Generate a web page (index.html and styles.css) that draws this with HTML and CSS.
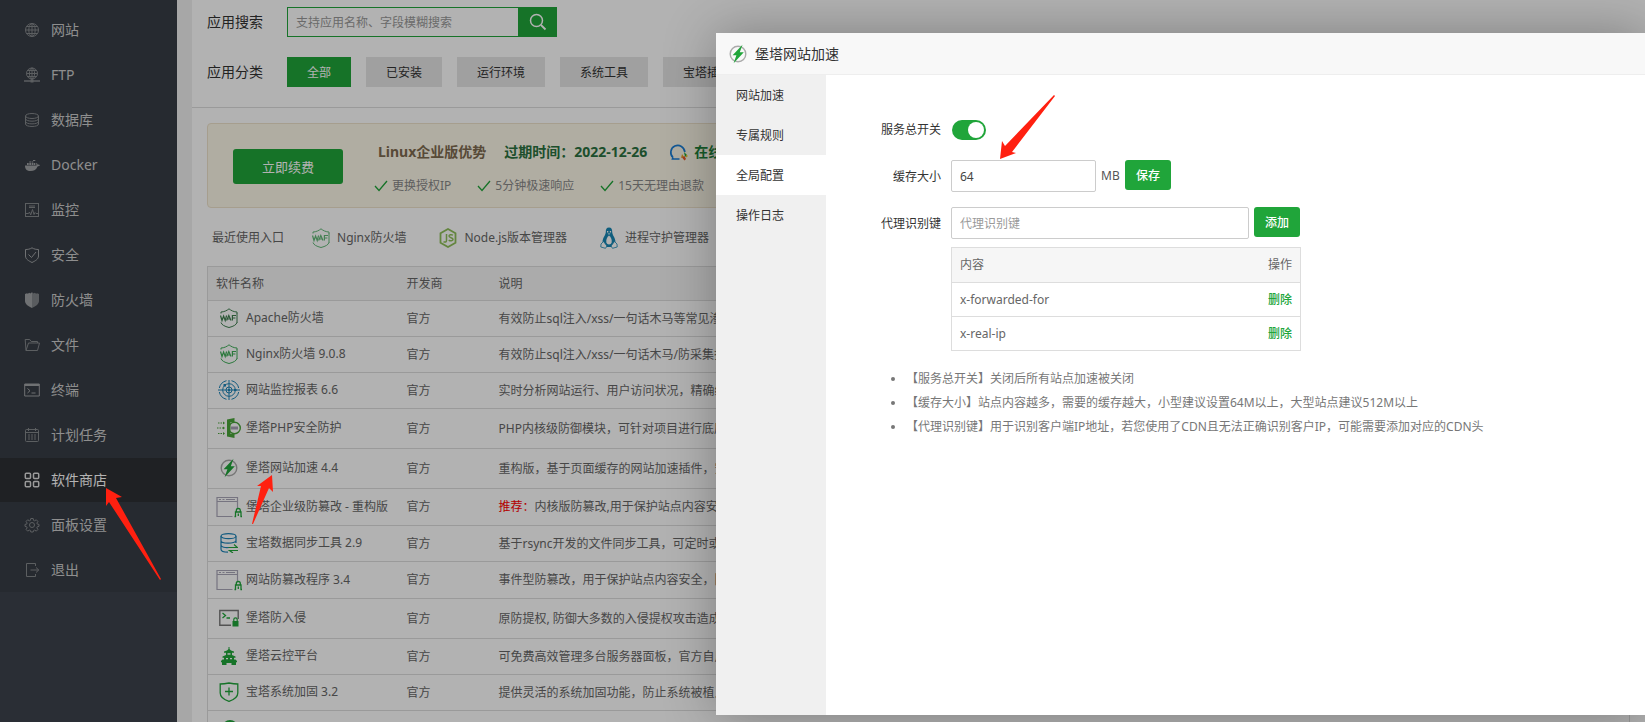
FILE: index.html
```html
<!DOCTYPE html>
<html lang="zh-CN">
<head>
<meta charset="utf-8">
<title>软件商店</title>
<link rel="stylesheet" href="styles.css">
</head>
<body>
<svg class="defs" aria-hidden="true">
  <symbol id="waf" viewBox="0 0 18 20">
    <path d="M1 5.500V4C4 4 7 2.500 9 .8 11 2.500 14 4 17 4v1.500M1 14.500c.8 2.500 3.500 3.800 8 5 4.500-1.200 7.200-2.500 8-5" fill="none" stroke="currentColor"/>
    <path d="M17 5v10" stroke="currentColor"/>
    <path d="M.5 7.500l1.500 5 1.600-4.500 1.600 4.500 1.400-5M6.600 12.500l2.200-5 2.200 5M7.400 11h3M12.400 12.500v-5H16M12.400 10h3" fill="none" stroke="currentColor" stroke-width="1.200"/>
  </symbol>
  <symbol id="bolt" viewBox="0 0 18 20">
    <circle cx="9" cy="10" r="7.800" fill="none" stroke="#aaa" stroke-width="1.400"/>
    <path d="M13.500.8L3.600 11.200h3.800L4.600 19.200 14.800 8.200h-4z" fill="#20a53a"/>
  </symbol>
  <symbol id="winlock" viewBox="0 0 26 22">
    <path d="M16.500 20.500H1V1.500h20.500v11M1 5.500h20.500" fill="none" stroke="#aaa6b8" stroke-width="1.200"/>
    <path d="M3 3.500h2M6.500 3.500h2M10 3.500h9" stroke="#aaa6b8"/>
    <path d="M19.500 21v-5h5.500v5M18.500 20.500h1.500M24.500 20.500H26M20.300 16v-1.500a2 2 0 0 1 4 0V16M22.300 17.500V20" fill="none" stroke="#20a53a" stroke-width="1.300"/>
  </symbol>
  <symbol id="check" viewBox="0 0 14 12">
    <path d="M1 6l4 4.500L13 1" fill="none" stroke="#20a53a" stroke-width="1.300"/>
  </symbol>
</svg>

<div class="app">
  <nav class="sidebar">
    <a class="nav-item" href="#site"><svg viewBox="0 0 16 16"><circle cx="8" cy="8" r="6.500"/><ellipse cx="8" cy="8" rx="3.200" ry="6.500"/><path d="M8 1.500v13M1.500 8h13M2.500 4.500h11M2.500 11.500h11"/></svg>网站</a>
    <a class="nav-item" href="#ftp"><svg viewBox="0 0 16 16"><circle cx="8" cy="6.500" r="5.500"/><ellipse cx="8" cy="6.500" rx="2.600" ry="5.500"/><path d="M8 1v13M2.500 6.500h11M3.500 3.500h9M3.500 9.500h9"/><path d="M0 14h16" stroke-width="1.500"/><path d="M6.500 14h3" stroke-width="3"/></svg>FTP</a>
    <a class="nav-item" href="#db"><svg viewBox="0 0 16 16"><ellipse cx="8" cy="4" rx="6.500" ry="2.500"/><path d="M1.500 4v8c0 3.300 13 3.300 13 0V4M1.500 6.700c0 3.300 13 3.300 13 0M1.500 9.400c0 3.300 13 3.300 13 0"/></svg>数据库</a>
    <a class="nav-item" href="#docker"><svg class="solid" viewBox="0 0 16 16"><path d="M1 8.500h11.500c0-1.200-.4-2-.2-2.800 1 .4 1.300 1.300 1.400 2 .8-.2 1.600 0 2.300.4-.5 1-1.500 1.400-2.500 1.400C12.500 12.500 10 14 6.500 14 3 14 1 12.500 1 8.500zM3 6h1.700v2H3zM5.300 6H7v2H5.300zM7.600 6h1.700v2H7.600zM5.300 4.500H7v1H5.300zM7.600 4.500h1.700v1H7.600zM9.800 6h1.500v2H9.800zM9 3h2.300v.9H9z"/></svg>Docker</a>
    <a class="nav-item" href="#monitor"><svg viewBox="0 0 16 16"><rect x="1.500" y="1.500" width="13" height="13"/><path d="M5 4h6M5 5.500h6M2 11.500h2.500l1-1.500 1.200 3L8.500 7.500l1.500 5 1-2 1 1h2"/></svg>监控</a>
    <a class="nav-item" href="#safe"><svg class="bright" viewBox="0 0 16 16"><path d="M8 .8C6 2.200 3.500 2.500 1.500 2.500V9c0 3.300 3.500 5 6.500 6.500 3-1.500 6.500-3.200 6.500-6.500V2.500C12.500 2.500 10 2.200 8 .8z"/><path d="M4.500 7.500l3 3 4.500-5.500"/></svg>安全</a>
    <a class="nav-item" href="#waf"><svg class="solid" viewBox="0 0 16 16"><path d="M1 2l2-.8.8.6 1.500-1 1 .7L8 .3V16C4 14 1 12 1 9z"/><path opacity=".7" d="M15 2l-2-.8-.8.6-1.500-1-1 .7L8 .3V16c4-2 7-4 7-7z"/></svg>防火墙</a>
    <a class="nav-item" href="#files"><svg viewBox="0 0 16 16"><path d="M2 13.500L1.200 2.500h4.500l1.500 2h6.300V6M2 13.500L4.500 6h11l-2 7.500z"/></svg>文件</a>
    <a class="nav-item" href="#term"><svg class="bright" viewBox="0 0 16 16"><path d="M.7 2h14.600v12H.7z"/><path d="M.7 3h14.600" stroke-width="2"/><path d="M3.500 6.500L6 8.700 3.500 11M7.500 11h4"/></svg>终端</a>
    <a class="nav-item" href="#cron"><svg viewBox="0 0 16 16"><rect x="1.500" y="2.500" width="13" height="12" rx="1"/><path d="M1.500 5.500h13M4.500 1v3M11.500 1v3"/><path d="M4 8h8M4 10h8M4 12h8" stroke-dasharray="2 1"/></svg>计划任务</a>
    <a class="nav-item active" href="#soft"><svg viewBox="0 0 16 16"><g stroke-width="1.500"><rect x="1.300" y="1.300" width="5.200" height="5.200" rx="1"/><rect x="9.500" y="1.300" width="5.200" height="5.200" rx="1"/><rect x="1.300" y="9.500" width="5.200" height="5.200" rx="1"/><rect x="9.500" y="9.500" width="5.200" height="5.200" rx="1"/></g></svg>软件商店</a>
    <a class="nav-item" href="#config"><svg viewBox="0 0 16 16"><circle cx="8" cy="8" r="2.500"/><path d="M6.800 1.500h2.400l.4 1.900 1 .4 1.700-1 1.600 1.600-1 1.700.4 1 1.700.3v1.900l-1.700.5-.4 1 1 1.700-1.600 1.600-1.700-1-1 .4-.4 1.500H6.800l-.4-1.500-1-.4-1.700 1-1.600-1.600 1-1.700-.4-1L1 9.300V7.400l1.700-.3.4-1-1-1.700 1.600-1.600 1.700 1 1-.4z"/></svg>面板设置</a>
    <a class="nav-item" href="#exit"><svg viewBox="0 0 16 16"><path d="M11.500 4V1.500h-9v13h9V12M6.500 8h8M12 5.500L14.800 8 12 10.500"/></svg>退出</a>
  </nav>

  <main class="main">
    <section class="filters">
      <form class="filter-row">
        <label class="filter-label" for="q">应用搜索</label>
        <input class="search-input" id="q" type="text" placeholder="支持应用名称、字段模糊搜索">
        <button class="search-btn" type="button" aria-label="搜索"><svg viewBox="0 0 18 18"><circle cx="7.500" cy="7.500" r="6" fill="none" stroke="#fff" stroke-width="1.500"/><path d="M12 12l4.500 4.500" stroke="#fff" stroke-width="1.800"/></svg></button>
      </form>
      <div class="filter-row">
        <span class="filter-label">应用分类</span>
        <div class="cats">
          <button class="cat on" type="button">全部</button>
          <button class="cat" type="button">已安装</button>
          <button class="cat" type="button">运行环境</button>
          <button class="cat" type="button">系统工具</button>
          <button class="cat" type="button">宝塔插件</button>
        </div>
      </div>
    </section>

    <section class="store">
      <div class="banner">
        <button class="renew" type="button">立即续费</button>
        <div class="banner-info">
          <div class="banner-top">
            <strong class="adv">Linux企业版优势</strong>
            <strong class="expire">过期时间：2022-12-26</strong>
            <a class="service" href="#service"><svg viewBox="0 0 20 18"><path d="M4 14.500A7 7 0 1 1 15.800 9M4 14.500L3.500 16h7" fill="none" stroke="#1c7fd6" stroke-width="1.700"/><path d="M13 11l2 3-3 1z" fill="#f0a020"/><path d="M15 9l3 3-2 2z" fill="#20a53a"/><path d="M13 14.500l2.500-1.500 1.500 3-1.500 1.500z" fill="#e8592a"/><path d="M17 11.500l2 1.500-2 1.500z" fill="#f0c020"/></svg>在线</a>
          </div>
          <ul class="perks">
            <li><svg><use href="#check"/></svg>更换授权IP</li>
            <li><svg><use href="#check"/></svg>5分钟极速响应</li>
            <li><svg><use href="#check"/></svg>15天无理由退款</li>
          </ul>
        </div>
      </div>

      <div class="recent">
        <span>最近使用入口</span>
        <a href="#r1"><svg class="ic-waf light"><use href="#waf"/></svg>Nginx防火墙</a>
        <a href="#r2"><svg class="ic-node" viewBox="0 0 18 20"><path d="M9 1l7.500 4.200v9.600L9 19l-7.500-4.200V5.200z" fill="none" stroke="#8fbf5a" stroke-width="1.800"/><path d="M7.500 6v6.500c0 1.500-1 2-3 1.200M14 7.200c-1.600-.9-4-.7-4 .9 0 2 4 1.200 4 3.200 0 1.800-2.700 1.900-4.300.8" fill="none" stroke="#8fbf5a" stroke-width="1.500"/></svg>Node.js版本管理器</a>
        <a href="#r3"><svg class="ic-tux" viewBox="0 0 18 22"><path d="M9 .5c-2.500 0-3.300 2-3.200 4.500 0 3-2.800 5-3.300 9.500L5 18l1 2h6l1-2 2.500-3.500C15 10 12.200 8 12.200 5c.1-2.500-.7-4.500-3.200-4.500z" fill="#1686b4"/><path d="M9 8.500c-2 1.500-3 4-2.700 7 .8 2.500 4.600 2.500 5.400 0 .3-3-.7-5.500-2.700-7z" fill="#fff"/><path d="M7 4h1.300v1.500H7zM9.800 4h1.300v1.500H9.800zM7.500 6.500h3L9 7.800z" fill="#fff"/><path d="M1 17l2.500-2.500L7 19l-1.500 2.300L.8 20zM17 17l-2.500-2.500L11 19l1.500 2.300 4.700-1.300z" fill="#fff" stroke="#1686b4" stroke-width=".8"/></svg>进程守护管理器</a>
      </div>

      <table class="soft">
        <colgroup><col class="c-name"><col class="c-dev"><col></colgroup>
        <thead><tr><th>软件名称</th><th>开发商</th><th>说明</th></tr></thead>
        <tbody>
          <tr><td><span class="name"><i><svg class="ic-waf dark"><use href="#waf"/></svg></i>Apache防火墙</span></td><td>官方</td><td>有效防止sql注入/xss/一句话木马等常见渗透攻击</td></tr>
          <tr><td><span class="name"><i><svg class="ic-waf"><use href="#waf"/></svg></i>Nginx防火墙 9.0.8</span></td><td>官方</td><td>有效防止sql注入/xss/一句话木马/防采集扫描</td></tr>
          <tr><td><span class="name"><i><svg width="22" height="20" viewBox="0 0 22 20"><g fill="none" stroke="#1d84b8"><path d="M8.500.7A9.800 9.800 0 0 0 1.300 8M1.300 12a9.800 9.800 0 0 0 7.200 7.300M13.500.7A9.800 9.800 0 0 1 20.700 8M20.700 12a9.800 9.800 0 0 1-7.200 7.300M0 10h22M11 0v20"/><circle cx="11" cy="10" r="6.300"/><circle cx="11" cy="10" r="3"/></g><path d="M5.500 4h2.500v2.500H5.500zM16 9h2.500v2H16zM10 9h2v2h-2z" fill="#1d84b8"/></svg></i>网站监控报表 6.6</span></td><td>官方</td><td>实时分析网站运行、用户访问状况，精确统计</td></tr>
          <tr class="tall"><td><span class="name"><i><svg width="24" height="20" viewBox="0 0 24 20"><path d="M10 1.500L17.500 0v4h-4v12h4v4L10 18.500z" fill="#4aa53a"/><circle cx="17.500" cy="10" r="5.800" fill="none" stroke="#4aa53a" stroke-width="1.400"/><path d="M14 8.500h7v3h-7z" fill="#a8a3b5"/><path d="M1 5h5M0 10h6M1 15.500h5" stroke="#4aa53a" stroke-width="1.200" stroke-dasharray="1.500 1"/><path d="M6 3.500l2 1.500-2 1.500zM6 8.500l2 1.500-2 1.500zM6 14l2 1.500L6 17z" fill="#4aa53a"/></svg></i>堡塔PHP安全防护</span></td><td>官方</td><td>PHP内核级防御模块，可针对项目进行底层防护</td></tr>
          <tr class="tall"><td><span class="name"><i><svg class="ic-waf"><use href="#bolt"/></svg></i>堡塔网站加速 4.4</span></td><td>官方</td><td>重构版，基于页面缓存的网站加速插件，安装</td></tr>
          <tr class="mid"><td><span class="name"><i><svg class="ic-lock"><use href="#winlock"/></svg></i>堡塔企业级防篡改 - 重构版</span></td><td>官方</td><td><span class="hot">推荐：</span>内核版防篡改,用于保护站点内容安全</td></tr>
          <tr><td><span class="name"><i><svg width="18" height="20" viewBox="0 0 18 20"><g fill="none" stroke="#1d84b8" stroke-width="1.200"><ellipse cx="8.500" cy="3.200" rx="7.500" ry="2.500"/><path d="M1 3.200v13c0 2 3 3 7 3M16 3.200V10M1 7.700c0 3 13 3.500 15 0M1 12c0 2.200 4.500 3 8 2.500"/></g><path d="M8.500 14.500h9L14 11.500M18 17.500H9.500l3.500 2.500" fill="none" stroke="#20a53a" stroke-width="1.200"/></svg></i>宝塔数据同步工具 2.9</span></td><td>官方</td><td>基于rsync开发的文件同步工具，可定时或实时</td></tr>
          <tr class="mid"><td><span class="name"><i><svg class="ic-lock"><use href="#winlock"/></svg></i>网站防篡改程序 3.4</span></td><td>官方</td><td>事件型防篡改，用于保护站点内容安全，阻止</td></tr>
          <tr class="tall"><td><span class="name"><i><svg width="20" height="18" viewBox="0 0 20 18"><path d="M12 16.200H.8V1.500h18.400V10" fill="none" stroke="#777" stroke-width="1.400"/><path d="M3.500 4l3 2.500-3 2.500M7.500 9H11" fill="none" stroke="#20a53a" stroke-width="1.300"/><path d="M13.500 12h6v5.500h-6z" fill="#20a53a"/><path d="M14.800 12v-1.500a1.700 1.700 0 0 1 3.400 0V12" fill="none" stroke="#20a53a" stroke-width="1.200"/></svg></i>堡塔防入侵</span></td><td>官方</td><td>原防提权, 防御大多数的入侵提权攻击造成的</td></tr>
          <tr><td><span class="name"><i><svg width="18" height="18" viewBox="0 0 18 18"><path d="M8.500 0h1v2L11 3.500l3 1v1.300h-2V8l3.500 1.500v1.300H14V12.500h1.500L17 14v1.200h-1V18h-4.500v-2h-5v2H2v-2.800H1V14l1.500-1.500H4v-1.700H2.500V9.500L6 8V5.800H4V4.500l3-1L8.500 2zM6 11v1.300h2V11zM10 11v1.300h2V11z" fill="#20a53a"/><path d="M7.500 6.200h3v1.500h-3z" fill="#fff"/></svg></i>堡塔云控平台</span></td><td>官方</td><td>可免费高效管理多台服务器面板，官方自用</td></tr>
          <tr><td><span class="name"><i><svg width="20" height="20" viewBox="0 0 20 20"><path d="M1.200 2C5 2 7.500 1.500 10 1c2.500.5 5 1 8.800 1V11c0 4-4.800 7-8.800 8.300C6 18 1.200 15 1.200 11zM10 5.500v8M6 9.500h8" fill="none" stroke="#20a53a" stroke-width="1.300"/></svg></i>宝塔系统加固 3.2</span></td><td>官方</td><td>提供灵活的系统加固功能，防止系统被植入</td></tr>
          <tr><td><span class="name"><i><svg width="20" height="20" viewBox="0 0 20 20"><circle cx="11" cy="10" r="8" fill="#20a53a"/></svg></i></span></td><td></td><td></td></tr>
        </tbody>
      </table>
    </section>
  </main>

  <div class="shade"></div>

  <section class="dialog" role="dialog" aria-labelledby="dlg-title">
    <header class="dialog-head"><svg class="ic-waf"><use href="#bolt"/></svg><h1 id="dlg-title">堡塔网站加速</h1></header>
    <div class="dialog-body">
      <nav class="tabs">
        <a href="#t1">网站加速</a>
        <a href="#t2">专属规则</a>
        <a class="on" href="#t3">全局配置</a>
        <a href="#t4">操作日志</a>
      </nav>
      <div class="pane">
        <div class="field switch-field">
          <label for="sw">服务总开关</label>
          <input class="switch" id="sw" type="checkbox" checked>
        </div>
        <div class="field">
          <label for="size">缓存大小</label>
          <div class="controls"><input class="box size" id="size" type="text" value="64"><span class="unit">MB</span><button class="btn" type="button">保存</button></div>
        </div>
        <div class="field">
          <label for="key">代理识别键</label>
          <div class="controls"><input class="box key" id="key" type="text" placeholder="代理识别键"><button class="btn" type="button">添加</button></div>
        </div>
        <table class="keys">
          <thead><tr><th>内容</th><th>操作</th></tr></thead>
          <tbody>
            <tr><td>x-forwarded-for</td><td><a href="#d1">删除</a></td></tr>
            <tr><td>x-real-ip</td><td><a href="#d2">删除</a></td></tr>
          </tbody>
        </table>
        <ul class="tips">
          <li>【服务总开关】关闭后所有站点加速被关闭</li>
          <li>【缓存大小】站点内容越多，需要的缓存越大，小型建议设置64M以上，大型站点建议512M以上</li>
          <li>【代理识别键】用于识别客户端IP地址，若您使用了CDN且无法正确识别客户IP，可能需要添加对应的CDN头</li>
        </ul>
      </div>
    </div>
  </section>

  <svg class="arrow arrow-menu" viewBox="0 0 56 93" aria-hidden="true"><path d="M0 0l16 9-6 1 45 81-1 1L3 14l-3 4z"/></svg>
  <svg class="arrow arrow-row" viewBox="0 0 22 50" aria-hidden="true"><path d="M20 0l1 17-4-4L1 49H0l9-38H5z"/></svg>
  <svg class="arrow arrow-input" viewBox="0 0 56 65" aria-hidden="true"><path d="M0 64l2-18 3 5L54 0l1 1-43 56 4 1z"/></svg>
</div>
</body>
</html>
```

FILE: styles.css
```css
* { box-sizing: border-box; }
body, input, button {
  font-family: "Noto Sans", "Noto Sans CJK SC", sans-serif;
  font-size: 12px;
}
body { margin: 0; color: #666; line-height: 18px; background: #f0f0f0; }
a { color: inherit; text-decoration: none; }
ul { margin: 0; padding: 0; list-style: none; }
button { padding: 0; border: 0; color: #fff; background: #20a53a; cursor: pointer; }
svg { flex: none; }
.defs { position: absolute; width: 0; height: 0; }
.app { position: relative; display: flex; height: 100vh; overflow: hidden; }

/* Sidebar */
.sidebar { flex: none; width: 177px; background: #3d424d; }
.sidebar::before { content: ""; display: block; height: 7px; background: #373d45; }
.nav-item {
  display: flex; align-items: center; gap: 11px; height: 45px; padding-left: 24px;
  font-size: 14px; color: #ccc; background: #373d45; border-top: 1px solid #373d45;
}
.nav-item svg { width: 16px; height: 16px; fill: none; stroke: #85888c; stroke-width: 1; }
.nav-item svg.bright { stroke: #a0a2a5; }
.nav-item svg.solid { fill: #a0a2a5; stroke: none; }
.nav-item.active { color: #fff; background: #2d3034; }
.nav-item.active svg { stroke: #ddd; }

/* Store page */
.main { flex: 1; min-width: 0; margin-left: 15px; background: #fff; }
.filters { display: flex; flex-direction: column; gap: 20px; padding: 7px 15px 20px; border-bottom: 1px solid #ddd; }
.filter-row { display: flex; align-items: center; height: 30px; }
.filter-label { width: 80px; font-size: 14px; color: #333; }
.search-input { width: 232px; height: 30px; padding: 0 8px; border: 1px solid #20a53a; outline: 0; background: #fff; }
.search-input::placeholder { color: #999; }
.search-btn { display: grid; place-items: center; width: 38px; height: 30px; }
.search-btn svg { width: 18px; height: 18px; }
.cats { display: flex; gap: 15px; }
.cat { height: 30px; padding: 0 20px; color: #333; background: #e6e6e6; white-space: nowrap; }
.cat.on { color: #fff; background: #20a53a; }
.store { padding: 15px 15px 0; }
.banner { display: flex; align-items: center; gap: 31px; height: 85px; padding: 1px 25px 0; border: 1px solid #eee2cc; border-radius: 4px; background: #fdf8e8; }
.renew { flex: none; width: 110px; height: 35px; border-radius: 3px; font-size: 13px; }
.banner-info { display: flex; flex-direction: column; gap: 16px; padding-top: 6px; white-space: nowrap; }
.banner-top { display: flex; gap: 18px; padding-left: 4px; font-size: 14px; line-height: 18px; }
.adv { color: #7d6a50; }
.expire { color: #2a713f; }
.service { display: flex; align-items: center; gap: 5px; margin-left: 4px; font-weight: 700; color: #20803a; }
.service svg { width: 20px; height: 18px; }
.perks { display: flex; gap: 26px; color: #888; }
.perks li { display: flex; align-items: center; gap: 4px; }
.perks svg { width: 14px; height: 12px; }
.recent { display: flex; align-items: center; gap: 33px; height: 58px; padding: 1px 0 0 5px; white-space: nowrap; }
.recent a { display: flex; align-items: center; gap: 7px; }
.recent span { margin-right: -5px; }
.ic-waf { width: 18px; height: 20px; color: #3fae58; }
.ic-waf.dark { color: #3f7f50; }
.ic-waf.light { color: #62b878; }
.ic-node { width: 18px; height: 20px; }
.ic-tux { width: 18px; height: 22px; }
.ic-lock { width: 26px; height: 22px; }

.soft { width: 100%; table-layout: fixed; border-collapse: collapse; border: 1px solid #ddd; white-space: nowrap; }
.c-name { width: 191px; }
.c-dev { width: 92px; }
.soft th, .soft td { height: 36px; padding: 0 8px; border-bottom: 1px solid #ddd; text-align: left; font-weight: 400; line-height: 18px; overflow: hidden; }
.soft th { height: 34px; background: #f5f5f5; }
.soft .mid td { height: 37px; }
.soft .tall td { height: 40px; }
.name { display: flex; align-items: center; gap: 4px; padding-bottom: 1px; }
.name i { display: grid; place-items: center; width: 26px; height: 22px; }
.hot { color: red; }

/* Dialog */
.shade { position: absolute; inset: 0; background: rgba(0, 0, 0, .3); }
.dialog { position: absolute; top: 33px; right: 0; bottom: 7px; left: 716px; display: flex; flex-direction: column; background: #fff; box-shadow: 1px 1px 50px rgba(0, 0, 0, .3); }
.dialog-head { display: flex; align-items: center; gap: 8px; height: 42px; padding-left: 13px; border-bottom: 1px solid #eee; background: #f8f8f8; }
.dialog-head h1 { margin: 0; font-size: 14px; font-weight: 400; color: #333; }
.dialog-body { flex: 1; display: flex; }
.tabs { flex: none; width: 110px; background: #f0f0f0; color: #333; }
.tabs a { display: block; height: 40px; padding: 1px 0 0 20px; line-height: 40px; }
.tabs .on { background: #fff; }
.pane { flex: 1; padding: 40px 20px 0 15px; color: #333; }
.field { display: flex; gap: 10px; height: 32px; margin-bottom: 15px; }
.field label { width: 100px; line-height: 34px; text-align: right; }
.field.switch-field { gap: 11px; height: 30px; align-items: center; }
.switch { appearance: none; display: flex; align-items: center; justify-content: flex-end; width: 34px; height: 20px; margin: 0; padding: 2px; border-radius: 10px; background: #20a53a; }
.switch::before { content: ""; width: 16px; height: 16px; border-radius: 50%; background: #fff; }
.controls { display: flex; gap: 5px; }
.box { height: 32px; padding: 0 8px; border: 1px solid #ccc; border-radius: 2px; outline: 0; color: #444; background: #fff; }
.box::placeholder { color: #999; }
.size { width: 145px; }
.key { width: 298px; }
.unit { width: 19px; line-height: 32px; color: #555; }
.btn { width: 46px; height: 30px; border-radius: 3px; font-weight: 500; }
.keys { width: 350px; margin: -7px 0 0 110px; border-collapse: collapse; border: 1px solid #ddd; color: #666; }
.keys th, .keys td { height: 34px; padding: 0 8px; border-bottom: 1px solid #ddd; text-align: left; font-weight: 400; }
.keys th { height: 35px; background: #f6f6f6; }
.keys th:last-child, .keys td:last-child { text-align: right; }
.keys a { font-weight: 500; color: #20a53a; }
.tips { margin-top: 16px; padding-left: 65px; list-style: disc; line-height: 24px; color: #777; }

/* Callout arrows */
.arrow { position: absolute; fill: #ff2010; }
.arrow-menu { left: 106px; top: 488px; width: 56px; height: 93px; }
.arrow-row { left: 252px; top: 475px; width: 22px; height: 50px; }
.arrow-input { left: 1000px; top: 95px; width: 56px; height: 65px; }
```
